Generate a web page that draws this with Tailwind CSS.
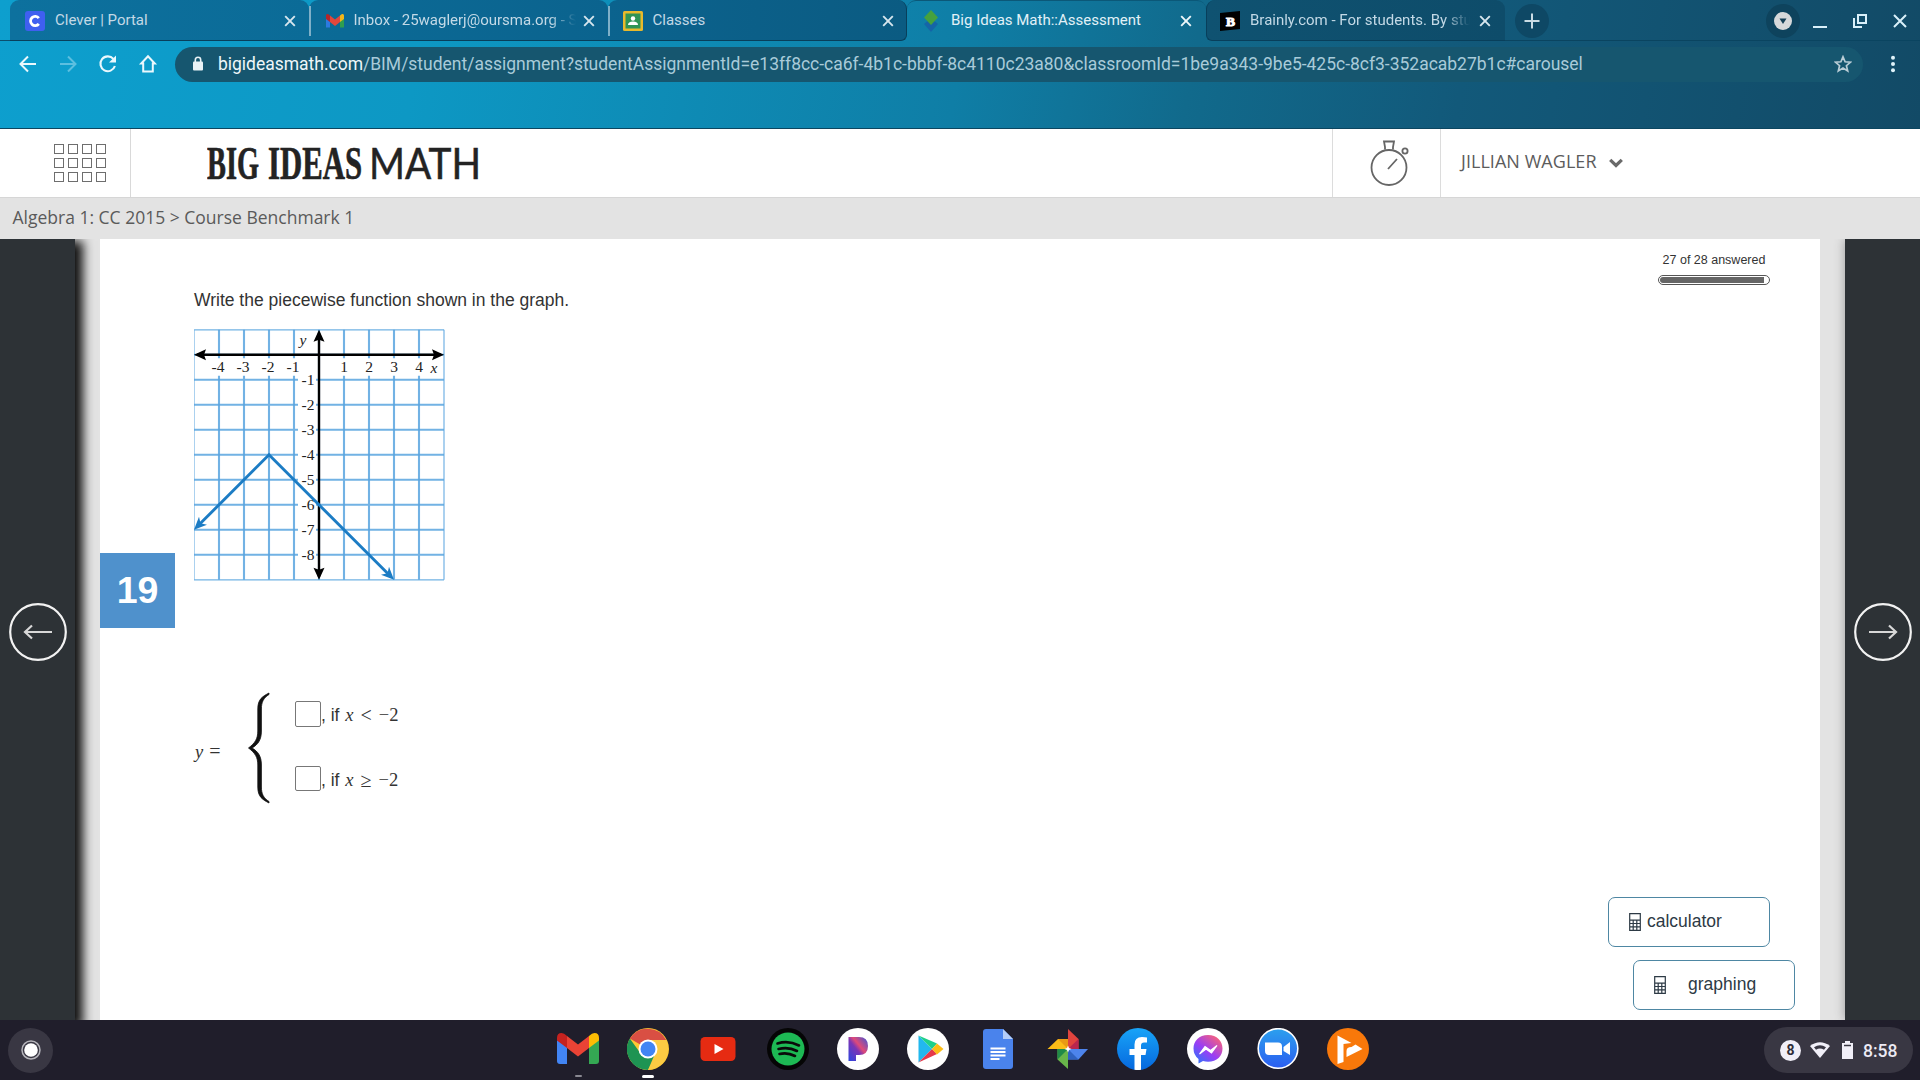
<!DOCTYPE html>
<html lang="en">
<head>
  <meta charset="UTF-8" />
  <meta name="viewport" content="width=device-width, initial-scale=1.0" />
  <title>Big Ideas Math::Assessment</title>
  <script src="https://cdn.jsdelivr.net/npm/@tailwindcss/browser@4"></script>
</head>
<body class="w-[1920px] h-[1080px] overflow-hidden flex flex-col bg-[#e3e3e3] font-['Liberation_Sans',sans-serif]">

  <!-- Browser frame -->
  <div class="h-[129px] shrink-0 border-b border-[#0c4660] bg-[linear-gradient(100deg,#0d9fce_0%,#0d98c4_22%,#0f7ea6_50%,#116a8c_62%,#12597a_76%,#124a66_100%)] font-['Roboto',sans-serif]">

    <!-- Tabs -->
    <div class="h-[41px] flex text-[15px] text-[#c3d9e6]">
      <div class="w-[10px] border-b border-[#0b4f6e]"></div>
      <div class="w-[299px] flex items-center pl-[15px] pr-3 pt-px rounded-t-[9px] border-b border-[#083f5b] bg-linear-to-r from-[#0d719e] to-[#0b6b97]">
        <svg class="w-5 h-5 shrink-0" viewBox="0 0 20 20"><rect width="20" height="20" rx="3" fill="#3f5ff0"/><path d="M13.8 7.2A4.6 4.6 0 1 0 13.8 12.8" fill="none" stroke="#fff" stroke-width="2.8"/></svg>
        <span class="ml-[10px] flex-1 whitespace-nowrap">Clever | Portal</span>
        <svg class="w-[14px] h-[14px]" viewBox="0 0 14 14"><path d="M2.2 2.2l9.6 9.6M11.8 2.2l-9.6 9.6" stroke="#d7e6ee" stroke-width="1.9"/></svg>
      </div>
      <div class="w-[299px] flex items-center pr-3 pt-px rounded-t-[9px] border-b border-[#083f5b] bg-linear-to-r from-[#0b6b97] to-[#0b638e]">
        <div class="w-[1.5px] h-[30px] bg-[#7fb0c8]"></div>
        <svg class="w-5 h-5 shrink-0 ml-[14px]" viewBox="0 0 20 20"><path d="M1 4v12.500h4V9z" fill="#2c7ae0"/><path d="M19 4v12.500h-4V9z" fill="#2f9e50"/><path d="M1 4.500q0-2 2-1.500l2 1.500V11L1 8z" fill="#b3262a"/><path d="M5 4.500l5 4 5-4V11l-5 4-5-4z" fill="#e2473c"/><path d="M19 4.500q0-2-2-1.500l-2 1.500V11l4-3z" fill="#f2b619"/></svg>
        <span class="ml-[9px] w-[222px] whitespace-nowrap mask-r-from-88% mask-r-to-100%">Inbox - 25waglerj@oursma.org - S</span>
        <span class="flex-1"></span>
        <svg class="w-[14px] h-[14px] shrink-0" viewBox="0 0 14 14"><path d="M2.2 2.2l9.6 9.6M11.800 2.2l-9.6 9.6" stroke="#d7e6ee" stroke-width="1.9"/></svg>
      </div>
      <div class="w-[299px] flex items-center pr-[11px] pt-px rounded-t-[9px] border-b border-r rounded-br-[6px] border-[#083f5b] bg-linear-to-r from-[#0b638e] to-[#0b5b82]">
        <div class="w-[1.5px] h-[30px] bg-[#7fb0c8]"></div>
        <svg class="w-5 h-5 shrink-0 ml-[13px]" viewBox="0 0 20 20"><rect width="20" height="20" rx="1.500" fill="#e8b92c"/><rect x="2.500" y="2.500" width="15" height="15" fill="#2f9455"/><circle cx="10" cy="7.500" r="2.200" fill="#fff"/><path d="M5 14q0-3.500 5-3.500t5 3.500z" fill="#fff"/></svg>
        <span class="ml-[10px] flex-1">Classes</span>
        <svg class="w-[14px] h-[14px]" viewBox="0 0 14 14"><path d="M2.2 2.2l9.6 9.6M11.8 2.2l-9.6 9.6" stroke="#d7e6ee" stroke-width="1.9"/></svg>
      </div>
      <div class="w-[299px] flex items-center pl-[14px] pr-[13px] pb-px rounded-t-[9px] border-t border-[#0b5878] text-[#e2f1f7]">
        <svg class="w-5 h-[22px] shrink-0" viewBox="0 0 20 22"><path d="M3 14l7-6 7 6-7 8z" fill="#1565a8"/><path d="M10 0l7 7.500-7 7.500-7-7.500z" fill="#46a13e"/></svg>
        <span class="ml-[10px] flex-1 whitespace-nowrap">Big Ideas Math::Assessment</span>
        <svg class="w-[14px] h-[14px]" viewBox="0 0 14 14"><path d="M2.200 2.2l9.6 9.6M11.8 2.2l-9.6 9.6" stroke="#eef7fa" stroke-width="1.9"/></svg>
      </div>
      <div class="w-[299px] flex items-center pl-[13px] pr-[13px] pt-px rounded-t-[9px] border-b border-l rounded-bl-[6px] border-[#083f5b] bg-linear-to-r from-[#0f5271] to-[#0e4c6a]">
        <svg class="w-5 h-5 shrink-0 overflow-visible" viewBox="0 0 20 20"><path d="M0 2l20-2v18L0 20z" fill="#000"/><text x="10.500" y="14.500" text-anchor="middle" font-family="Liberation Serif, serif" font-weight="bold" font-size="13.500" fill="#fff" stroke="#fff" stroke-width="1">B</text></svg>
        <span class="ml-[10px] w-[220px] whitespace-nowrap mask-r-from-88% mask-r-to-100%">Brainly.com - For students. By stu</span>
        <span class="flex-1"></span>
        <svg class="w-[14px] h-[14px] shrink-0" viewBox="0 0 14 14"><path d="M2.2 2.2l9.6 9.6M11.8 2.2l-9.6 9.6" stroke="#d7e6ee" stroke-width="1.9"/></svg>
      </div>
      <div class="flex-1 flex items-center border-b border-[#0a4460] pl-[10px] pr-[12px] pt-px">
        <div class="w-[34px] h-[34px] rounded-full bg-[#0e4865] flex items-center justify-center">
          <svg class="w-4 h-4" viewBox="0 0 16 16"><path d="M8 .5v15M.5 8h15" stroke="#c9dbe4" stroke-width="2"/></svg>
        </div>
        <span class="flex-1"></span>
        <div class="w-[34px] h-[34px] rounded-full bg-[#0e435d] flex items-center justify-center mr-[12px]">
          <svg class="w-[18px] h-[18px]" viewBox="0 0 18 18"><circle cx="9" cy="9" r="9" fill="#d6d8da"/><path d="M5.500 6.500h7L9 12z" fill="#143f56"/></svg>
        </div>
        <svg class="w-4 h-4 mr-6" viewBox="0 0 16 16"><path d="M1 14h14" stroke="#d9f0fa" stroke-width="2"/></svg>
        <svg class="w-4 h-4 mr-6" viewBox="0 0 16 16"><path d="M6 2h8v8H6zM2 5v9h8" fill="none" stroke="#d9f0fa" stroke-width="2"/></svg>
        <svg class="w-4 h-4" viewBox="0 0 16 16"><path d="M2 2l12 12M14 2L2 14" stroke="#d9f0fa" stroke-width="2"/></svg>
      </div>
    </div>

    <!-- Toolbar -->
    <div class="flex items-center h-[46px] pl-[18px] pr-[17px]">
      <svg class="w-5 h-5 mr-5" viewBox="0 0 20 20"><path d="M18 10H3M10 2.500L2.500 10l7.500 7.500" fill="none" stroke="#eaf8fd" stroke-width="2"/></svg>
      <svg class="w-5 h-5 mr-5" viewBox="0 0 20 20"><path d="M2 10h15M10 2.500l7.500 7.500-7.500 7.500" fill="none" stroke="#5cbfe0" stroke-width="2"/></svg>
      <svg class="w-5 h-5 mr-5" viewBox="0 0 20 20"><path d="M16.900 12A7.400 7.400 0 1 1 15.400 4.900" fill="none" stroke="#eaf8fd" stroke-width="2.100"/><path d="M18 1.500v7h-7z" fill="#eaf8fd"/></svg>
      <svg class="w-5 h-5 mr-[17px]" viewBox="0 0 20 20"><path d="M10 2.200L3.200 9.500h2v8h9.600v-8h2z" fill="none" stroke="#eaf8fd" stroke-width="2"/></svg>
      <div class="flex-1 h-[35px] rounded-full bg-[#16566f] flex items-center pl-[17px] pr-[11px]">
        <svg class="w-3 h-4" viewBox="0 0 12 16"><rect x="1" y="5.500" width="10" height="9" rx="1" fill="#e8f2f6"/><path d="M3.300 6V4a2.700 2.700 0 0 1 5.400 0v2" fill="none" stroke="#e8f2f6" stroke-width="1.600"/></svg>
        <span class="ml-[14px] text-[17.5px] tracking-[-0.012px] text-[#a9cbd9] whitespace-nowrap"><span class="text-[#eef6f9]">bigideasmath.com</span>/BIM/student/assignment?studentAssignmentId=e13ff8cc-ca6f-4b1c-bbbf-8c4110c23a80&amp;classroomId=1be9a343-9be5-425c-8cf3-352acab27b1c#carousel</span>
        <span class="flex-1"></span>
        <svg class="w-[18px] h-[18px]" viewBox="0 0 18 18"><path d="M9 1.800l2.100 5 5.400.4-4.100 3.500 1.300 5.300L9 13.100 4.300 16l1.300-5.300L1.500 7.200l5.400-.4z" fill="none" stroke="#b9cdd6" stroke-width="1.700"/></svg>
      </div>
      <svg class="w-5 h-5 ml-[20px]" viewBox="0 0 20 20" fill="#e0f3fa"><circle cx="10" cy="3.800" r="2"/><circle cx="10" cy="10" r="2"/><circle cx="10" cy="16.200" r="2"/></svg>
    </div>
  </div>

  <!-- Site header -->
  <div class="h-[69px] shrink-0 bg-white border-b border-[#d6d6d6] flex items-center">
    <div class="w-[131px] h-full border-r border-[#d9d9d9] pl-[54px] flex items-center">
      <div class="grid grid-cols-4 gap-x-[4px] gap-y-[4px]" id="apps"></div>
    </div>
    <svg class="w-[274px] h-[60px] ml-[76px]" viewBox="0 0 274 60" fill="#232323">
      <text x="0" y="46" font-family="Liberation Serif, serif" font-weight="bold" font-size="45.500" textLength="52" lengthAdjust="spacingAndGlyphs" stroke="#232323" stroke-width=".7">BIG</text>
      <text x="61" y="46" font-family="Liberation Serif, serif" font-weight="bold" font-size="45.500" textLength="94" lengthAdjust="spacingAndGlyphs" stroke="#232323" stroke-width=".7">IDEAS</text>
      <text x="162" y="46" font-family="Lato, sans-serif" font-size="43" textLength="112" lengthAdjust="spacingAndGlyphs" stroke="#232323" stroke-width=".5">MATH</text>
    </svg>
    <div class="w-[851px]"></div>
    <div class="w-[109px] h-full border-x border-[#dcdcdc] flex items-center justify-center">
      <svg class="w-10 h-[46px] mb-px ml-[7px]" viewBox="0 0 40 46" fill="none" stroke="#666" stroke-width="1.800"><circle cx="19" cy="27.500" r="17.500"/><path d="M15 9.500V7L14 1.500h10L23 7v2.500M18 29l9-10"/><circle cx="35" cy="11" r="2.600"/></svg>
    </div>
    <div class="flex items-center ml-[19px] mb-[3px] font-['Open_Sans',sans-serif] text-[18px] tracking-[0.05px] text-[#5c5c5c]">
      <span class="ml-px">JILLIAN WAGLER</span>
      <svg class="w-[14px] h-[10px] ml-3 mt-[2px]" viewBox="0 0 14 10"><path d="M1.200 1.800L7 7.500l5.800-5.700" fill="none" stroke="#6a6a6a" stroke-width="3.200"/></svg>
    </div>
  </div>

  <!-- Breadcrumb -->
  <div class="h-[41px] shrink-0 flex items-center pl-[12.5px] pb-[2px] font-['Open_Sans',sans-serif] text-[17.5px] text-[#5a5a5a]">Algebra 1: CC 2015 &gt; Course Benchmark 1</div>

  <!-- Question area -->
  <div class="flex-1 flex min-h-0 overflow-hidden">
    <div class="w-[75px] bg-[#2d3236] shadow-[5px_5px_10px_3px_#111] pl-[9px] pt-[364px]">
      <svg class="w-[58px] h-[58px]" viewBox="0 0 58 58" fill="none" stroke="#f2f2f2"><circle cx="29" cy="29" r="27.800" stroke-width="2.200"/><path d="M43 29H17M23 22.500L16 29l7 6.500" stroke="#d8d8d8" stroke-width="2.200"/></svg>
    </div>

    <div class="w-[1720px] ml-[25px] bg-white flex text-[#333] text-[17.5px]">
      <div class="w-[75px] pt-[314px]">
        <div class="w-[75px] h-[75px] bg-[#4f91cc] text-white font-bold text-[37.5px] flex items-center justify-center">19</div>
      </div>
      <div class="w-[1200px] pl-[19px] pt-[51px]">
        <p class="leading-[20px]">Write the piecewise function shown in the graph.</p>
        <svg class="w-[252px] h-[252px] mt-[19px]" viewBox="0 0 252 252" id="graph"></svg>

        <div class="flex mt-[108px] font-['Liberation_Serif',serif]">
          <div class="w-[52px] pt-[49px] text-[18.500px] leading-[26px] whitespace-nowrap"><i class="ml-px">y</i><span class="ml-[6px] text-[20px]">=</span></div>
          <svg class="w-[26px] h-[114px] mt-[2px]" viewBox="0 0 26 114"><path d="M23 2C16.500 5.500 11.800 8 11.800 18V40C11.800 48 9 52 2.500 57C9 62 11.800 66 11.800 74V96C11.800 106 16.500 108.500 23 112V110.500C17.500 107 15.400 103 15.400 96V74C15.400 65 12 60.500 6 57C12 53.500 15.400 49 15.400 40V18C15.400 11 17.500 7 23 3.500z" fill="#111" stroke="#111" stroke-width=".8"/></svg>
          <div class="ml-[23px]">
            <div class="flex h-[27px] mt-[12px]">
              <div class="w-[26px] h-[26px] border border-[#777] rounded-[2px]"></div>
              <div class="leading-[29px] flex whitespace-pre text-[18.500px]"><span class="text-[17.5px] font-['Liberation_Sans',sans-serif]">, if </span><i class="ml-px">x</i><span class="ml-[7px] text-[20px]">&lt;</span><span class="ml-[7px]">−2</span></div>
            </div>
            <div class="flex h-[27px] mt-[38px]">
              <div class="w-[26px] h-[25px] border border-[#777] rounded-[2px]"></div>
              <div class="leading-[29px] flex whitespace-pre text-[18.500px]"><span class="text-[17.5px] font-['Liberation_Sans',sans-serif]">, if </span><i class="ml-px">x</i><span class="ml-[7px] text-[20px]">≥</span><span class="ml-[7px]">−2</span></div>
            </div>
          </div>
        </div>
      </div>

      <div class="flex-1 flex flex-col items-end pt-[13px] pr-[25px]">
        <div class="w-[112px] mr-[25px] flex flex-col items-center">
          <span class="text-[12.5px] leading-[16px] whitespace-nowrap">27 of 28 answered</span>
          <div class="mt-[7px] w-[112px] h-[10px] p-px rounded-full border border-[#555] bg-white overflow-hidden">
            <div class="h-full rounded-l-full bg-[#666]" style="width: 96%"></div>
          </div>
        </div>
        <button class="mt-[612px] mr-[25px] w-[162px] h-[50px] rounded-[7px] border border-[#4e87a3] bg-white flex items-center pl-[20px] text-[#2d3a45]">
          <svg class="w-3 h-[18px]" viewBox="0 0 12 18" fill="none" stroke="#2d3a45"><path d="M.7.7h10.600v16.600H.7zM.7 7.200h10.600M.7 10.500h10.600M.7 13.900h10.600M4.200 7v10M7.800 7v10" stroke-width="1.200"/></svg>
          <span class="ml-[6px] mb-[2px]">calculator</span>
        </button>
        <button class="mt-[13px] w-[162px] h-[50px] rounded-[7px] border border-[#4e87a3] bg-white flex items-center pl-[20px] text-[#2d3a45]">
          <svg class="w-3 h-[18px]" viewBox="0 0 12 18" fill="none" stroke="#2d3a45"><path d="M.7.7h10.600v16.600H.7zM.7 7.200h10.600M.7 10.500h10.600M.7 13.900h10.600M4.200 7v10M7.800 7v10" stroke-width="1.200"/></svg>
          <span class="ml-[22px] mb-[2px]">graphing</span>
        </button>
      </div>
    </div>

    <div class="w-[75px] ml-[25px] bg-[#2d3236] shadow-[0_0_10px_#999] pl-[9px] pt-[364px]">
      <svg class="w-[58px] h-[58px]" viewBox="0 0 58 58" fill="none" stroke="#f2f2f2"><circle cx="29" cy="29" r="27.800" stroke-width="2.200"/><path d="M15 29h26M35 22.500l7 6.500-7 6.500" stroke="#d8d8d8" stroke-width="2.200"/></svg>
    </div>
  </div>

  <!-- Shelf -->
  <div class="h-[60px] shrink-0 bg-[#201e2b] relative z-10 flex items-center pl-[8px] pr-[7px]">
    <div class="w-[45px] h-[45px] rounded-full bg-[#393743] flex items-center justify-center">
      <svg class="w-5 h-5" viewBox="0 0 20 20"><circle cx="10" cy="10" r="9" fill="none" stroke="#b5b4ba" stroke-width="1.500"/><circle cx="10" cy="10" r="6.800" fill="#fff"/></svg>
    </div>
    <div class="ml-[504px] flex gap-[28px] -mt-[2px] flex-1">
      <!-- Gmail -->
      <div class="relative w-[42px] h-[42px]">
        <svg class="w-[42px] h-[42px]" viewBox="0 0 42 42"><path d="M0 12v21q0 3 3 3h7V18z" fill="#4285f4"/><path d="M42 12v21q0 3-3 3h-7V18z" fill="#34a853"/><path d="M0 11v-1Q0 5 4.500 5q2.500 0 5.500 3v12L0 12.500z" fill="#c5221f"/><path d="M10 8l11 8.500L32 8v12L21 28.500 10 20z" fill="#ea4335"/><path d="M42 11v-1q0-5-4.500-5Q35 5 32 8v12l10-7.500z" fill="#fbbc04"/></svg>
        <div class="absolute left-[18px] top-[47px] w-[7px] h-[2px] rounded bg-[#8a8992]"></div>
      </div>
      <!-- Chrome -->
      <div class="relative w-[42px] h-[42px]">
        <svg class="w-[42px] h-[42px]" viewBox="0 0 42 42"><circle cx="21" cy="21" r="21" fill="#fcc934"/><path d="M21 21L2.800 10.500A21 21 0 0 1 39.200 12H21z" fill="#d94f43"/><path d="M2.800 10.500A21 21 0 0 0 21 42l9-16.500-9 3.500-7-3z" fill="#1e9453"/><path d="M39.200 12H21v9h9l-9 21A21 21 0 0 0 39.200 12z" fill="#fccb43"/><circle cx="21" cy="21" r="9.500" fill="#fff"/><circle cx="21" cy="21" r="7.500" fill="#4285f4"/></svg>
        <div class="absolute left-[15px] top-[47px] w-[12px] h-[3px] rounded bg-white"></div>
      </div>
      <!-- YouTube -->
      <svg class="w-[42px] h-[42px]" viewBox="0 0 42 42"><rect x="3.500" y="9" width="35" height="24" rx="4.500" fill="#e62b12"/><path d="M17.500 16l9 5-9 5z" fill="#fff"/></svg>
      <!-- Spotify -->
      <svg class="w-[42px] h-[42px]" viewBox="0 0 42 42"><circle cx="21" cy="21" r="21" fill="#050505"/><circle cx="21" cy="21" r="16.500" fill="#1db954"/><path d="M10.500 15.500q11-3.500 21.500 2M11.500 21q10-2.500 18.500 2M12.500 26q8-2 15.500 2" fill="none" stroke="#0a0a0a" stroke-width="2.600" stroke-linecap="round"/></svg>
      <!-- Pandora -->
      <svg class="w-[42px] h-[42px]" viewBox="0 0 42 42"><defs><linearGradient id="pan" x1="0" y1="1" x2="1" y2="0"><stop offset="0" stop-color="#2b46e0"/><stop offset=".45" stop-color="#7b35b5"/><stop offset=".6" stop-color="#e04a78"/><stop offset="1" stop-color="#3a56d8"/></linearGradient></defs><circle cx="21" cy="21" r="21" fill="#fff"/><path d="M11.500 9H22q9 0 9 9t-9 9h-3v6h-7.500z" fill="url(#pan)"/></svg>
      <!-- Play Store -->
      <svg class="w-[42px] h-[42px]" viewBox="0 0 42 42"><circle cx="21" cy="21" r="21" fill="#fff"/><path d="M11.500 7.500v27L25 21z" fill="#22b8ee"/><path d="M11.500 7.500L25 21l5-5.500z" fill="#1fd08a"/><path d="M11.500 34.500L25 21l5 5z" fill="#e5394b"/><path d="M30 15.500L25 21l5 5.500 6.500-5.500z" fill="#fdbd16"/></svg>
      <!-- Docs -->
      <svg class="w-[42px] h-[42px]" viewBox="0 0 42 42"><path d="M6 4q0-3 3-3h17l10 10v27q0 3-3 3H9q-3 0-3-3z" fill="#4a83ec"/><path d="M26 1l10 10H26z" fill="#b4cdf8"/><path d="M13.500 20.500h15M13.500 24h15M13.500 27.500h15M13.500 31h9" stroke="#fff" stroke-width="2"/></svg>
      <!-- Photos -->
      <svg class="w-[42px] h-[42px]" viewBox="0 0 42 42"><path d="M21 1l10.500 10v10H21z" fill="#e0443e"/><path d="M31.500 11v10H21z" fill="#b9264e"/><path d="M41 21L31.500 31.500H21V21z" fill="#4d84ec"/><path d="M21 21l10.500 10.500H21z" fill="#2f62c0"/><path d="M21 41L10.500 31.500V21H21z" fill="#68b54a"/><path d="M10.500 31.500L21 21H10.500z" fill="#208a48"/><path d="M.5 21L11 11h10v10z" fill="#fbbd17"/><path d="M11 11l10 10V11z" fill="#e99a14"/><path d="M21 17.500l1 2.500 2.500 1-2.500 1-1 2.500-1-2.500-2.500-1 2.500-1z" fill="#fff"/></svg>
      <!-- Facebook -->
      <svg class="w-[42px] h-[42px]" viewBox="0 0 42 42"><defs><linearGradient id="fb" x1="0" y1="0" x2="0" y2="1"><stop offset="0" stop-color="#18a4f8"/><stop offset="1" stop-color="#0668de"/></linearGradient></defs><circle cx="21" cy="21" r="21" fill="url(#fb)"/><path d="M17.500 41.700V27h-5v-6h5v-4.500Q17.500 9 25 9q3 0 5 .5v5h-3q-3 0-3 3V21h5.500l-1 6H24v14.700q-3 .5-6.500 0z" fill="#fff"/></svg>
      <!-- Messenger -->
      <svg class="w-[42px] h-[42px]" viewBox="0 0 42 42"><defs><linearGradient id="ms" x1="0" y1="1" x2=".8" y2="0"><stop offset="0" stop-color="#1b7dfb"/><stop offset=".5" stop-color="#9a3df5"/><stop offset="1" stop-color="#fb6377"/></linearGradient></defs><circle cx="21" cy="21" r="21" fill="#fff"/><path d="M21 7C12 7 6.500 13 6.500 20.500q0 6.500 5 10.500v4.500l4.500-2.500q2.500.8 5 .8c9 0 14.500-6 14.500-13.300S30 7 21 7z" fill="url(#ms)"/><path d="M12.500 26l5.500-7.500 5.500 4 6.500-5-5.500 7.500-5.500-4z" fill="#fff" stroke="#fff" stroke-width="1.200"/></svg>
      <!-- Zoom -->
      <svg class="w-[42px] h-[42px]" viewBox="0 0 42 42"><defs><linearGradient id="zm" x1="0" y1="0" x2="0" y2="1"><stop offset="0" stop-color="#2ba0ee"/><stop offset="1" stop-color="#2b5df0"/></linearGradient></defs><circle cx="21" cy="20.500" r="19.800" fill="url(#zm)" stroke="#fff" stroke-width="1.600"/><path d="M8 14.500h13q4 0 4 4V27H12q-4 0-4-4zM26.500 19l6.500-5v13l-6.500-4z" fill="#fff"/></svg>
      <!-- Video player -->
      <svg class="w-[42px] h-[42px]" viewBox="0 0 42 42"><circle cx="21" cy="21" r="21" fill="#f8780a"/><path d="M10.500 7.500l14 7.500-8 1v18l-6 2z" fill="#fff"/><path d="M19.500 29v-6q0-4 5-4l4-2.500 7 4.500z" fill="#fff"/></svg>
    </div>
    <div class="w-[149px] h-[46px] rounded-full bg-[#393743] flex items-center pl-[16px] text-[#eceaf4] font-['Roboto',sans-serif]">
      <div class="w-[21px] h-[21px] rounded-full bg-[#f1eff8] text-[#2f2d39] text-[14px] font-bold flex items-center justify-center">8</div>
      <svg class="w-5 h-4 ml-[9px]" viewBox="0 0 20 16"><path d="M0 4Q10-3.500 20 4L10 16z" fill="#f1eff8"/><path d="M4 5.200q6-3.800 12 0l-2 2.500q-4-2.500-8 0z" fill="#393743"/></svg>
      <svg class="w-[11px] h-[18px] ml-[12px]" viewBox="0 0 11 18"><path d="M3 0h5v2h3v16H0V2h3z" fill="#f1eff8"/><path d="M2 4.500h7" stroke="#393743" stroke-width="1.500"/></svg>
      <span class="ml-[10px] text-[17.5px] font-medium mt-[3px]">8:58</span>
    </div>
  </div>

  <script>
    const apps = document.getElementById('apps');
    for (let i = 0; i < 12; i++) {
      const box = document.createElement('div');
      box.className = 'w-[10px] h-[10px] border-[1.5px] border-[#6e6e6e]';
      apps.appendChild(box);
    }

    // Coordinate plane: 25px cells, origin at (125, 25)
    const cell = 25, ox = 125, oy = 25;
    let g = '<g transform="translate(0 .8)">';
    for (let i = 0; i <= 10; i++) {
      const w = i === 0 || i === 10 ? 1.2 : 2.1;
      g += `<path d="M${i * cell} 0V250M0 ${i * cell}H250" stroke="#5aa5e0" stroke-width="${w}" opacity=".85"/>`;
    }
    g += '<path d="M13 28.5H113V46H13zM138 28.5H249V46H138z" fill="#fff"/><path d="M104 43H122V235H104z" fill="#fff"/><path d="M104 2H118V20H104z" fill="#fff"/>';
    g += '<path d="M3 25H247M125 3V247" stroke="#000" stroke-width="2.4"/>';
    g += '<path d="M0 25l12-5.500-2 5.500 2 5.500zM250 25l-12-5.500 2 5.500-2 5.500zM125 0l-5.500 12 5.500-2 5.500 2zM125 250l-5.500-12 5.500 2 5.500-2z"/>';
    g += '<g font-family="Liberation Serif, serif" font-size="15.5" fill="#222" text-anchor="middle">';
    [-4, -3, -2, -1, 1, 2, 3, 4].forEach(n => {
      g += `<text x="${ox + n * cell - (n < 0 ? 1 : 0)}" y="42">${n}</text>`;
    });
    for (let n = 1; n <= 8; n++) {
      g += `<text x="114" y="${oy + n * cell + 5}">-${n}</text>`;
    }
    g += '<text x="109" y="15" font-style="italic">y</text><text x="240" y="43" font-style="italic">x</text></g>';
    g += '<path d="M4 196L75 125L196 246" fill="none" stroke="#1c7cc4" stroke-width="2.9"/>';
    g += '<path d="M0 200l5-13 1.500 6.500 6.500 1.500zM200 250l-13-5 6.500-1.500 1.500-6.500z" fill="#1c7cc4"/></g>';
    document.getElementById('graph').innerHTML = g;
  </script>
</body>
</html>
